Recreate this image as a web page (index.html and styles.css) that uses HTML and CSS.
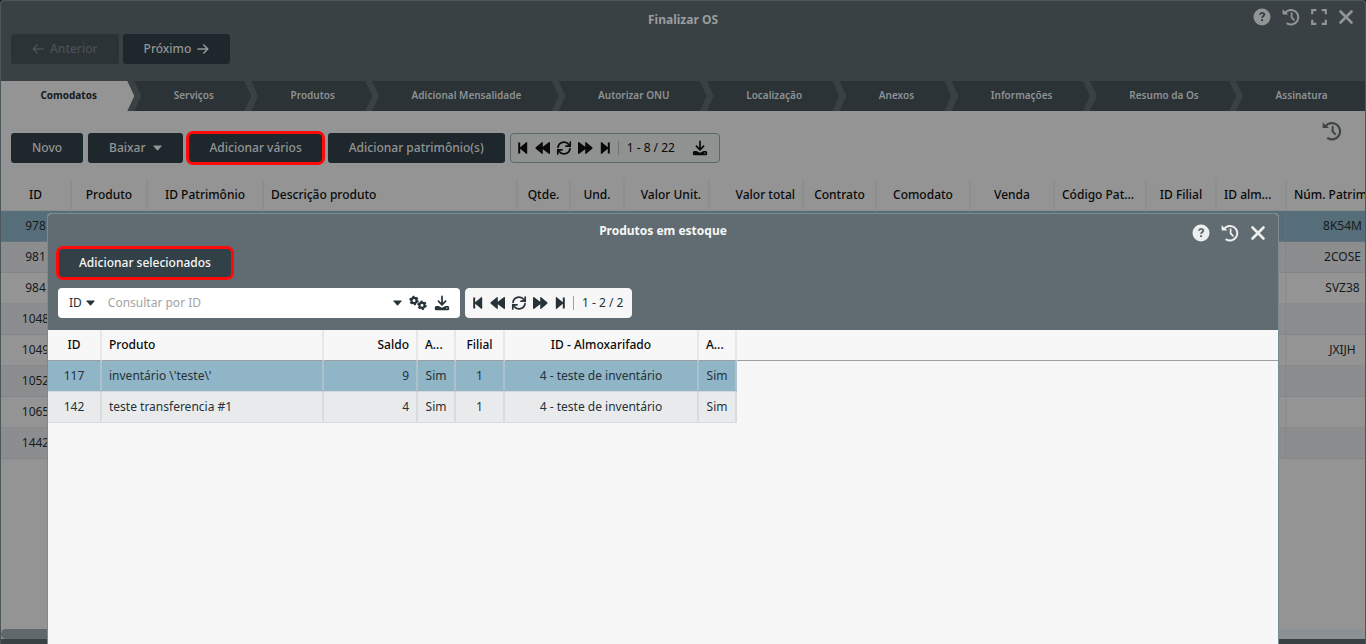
FILE: index.html
```html
<!DOCTYPE html>
<html lang="pt-BR">
<head>
<meta charset="utf-8">
<title>Finalizar OS</title>
<link rel="stylesheet" href="styles.css">
</head>
<body>
<svg class="sprite" aria-hidden="true">
  <symbol id="help" viewBox="0 0 18 18"><path fill="currentColor" fill-rule="evenodd" d="M9 .5a8.500 8.500 0 1 1 0 17a8.500 8.500 0 0 1 0-17zM6.200 6.800h1.900c.1-.8.500-1.100 1.100-1.100s1 .3 1 .9c0 1-1.900 1.200-1.900 3.100v.4h1.700c0-1.200 2.200-1.500 2.200-3.600c0-1.500-1.200-2.400-2.900-2.400c-1.900 0-3 1.100-3.100 2.700zM9.100 11a1.150 1.150 0 1 0 0 2.300a1.150 1.150 0 0 0 0-2.300z"/></symbol>
  <symbol id="history" viewBox="0 0 18 18"><g fill="none" stroke="currentColor" stroke-width="2"><path d="M3.300 4.600A7.300 7.300 0 1 1 5.400 15.600" stroke-linecap="round"/><path d="M9.600 5.200v4.300l2.300 2.300" stroke-width="1.800" stroke-linecap="round"/></g><path fill="currentColor" d="M.6 1.100L2.400 2.900L4.600 4.700L6.300 6.400H1.200q-.6 0-.6-.6z"/></symbol>
  <symbol id="expand" viewBox="0 0 16 16"><path fill="none" stroke="currentColor" stroke-width="2.200" d="M1.200 5.300V1.200H5.300M10.700 1.200h4.100v4.100M14.800 10.700v4.100h-4.100M5.300 14.800H1.200v-4.100"/></symbol>
  <symbol id="close" viewBox="0 0 16 16"><path fill="none" stroke="currentColor" stroke-width="2.600" stroke-linecap="round" d="M2.500 2.500l11 11M13.500 2.500l-11 11"/></symbol>
  <symbol id="left" viewBox="0 0 12 12"><path fill="none" stroke="currentColor" stroke-width="1.600" stroke-linecap="round" stroke-linejoin="round" d="M11 6H1.200M5.200 2L1.200 6l4 4"/></symbol>
  <symbol id="right" viewBox="0 0 12 12"><path fill="none" stroke="currentColor" stroke-width="1.600" stroke-linecap="round" stroke-linejoin="round" d="M1 6h9.800M6.800 2l4 4l-4 4"/></symbol>
  <symbol id="caret" viewBox="0 0 9 6"><path fill="currentColor" d="M.8.500h7.400q.8 0 .3.700L5 5.200q-.5.500-1 0L.5 1.200Q0 .5.800.500z"/></symbol>
  <symbol id="first" viewBox="1 1 14 14"><path fill="currentColor" d="M3.200 2.500h2v4.700l6-5q1-.7 1 .5v10.600q0 1.200-1 .5l-6-5v4.700h-2z"/></symbol>
  <symbol id="last" viewBox="1 1 14 14"><path fill="currentColor" d="M12.800 2.500h-2v4.700l-6-5q-1-.7-1 .5v10.600q0 1.200 1 .5l6-5v4.700h2z"/></symbol>
  <symbol id="rewind" viewBox="0 0 16 16"><path fill="currentColor" d="M.8 7.300L6.800 2.200q1-.7 1 .5v4L13.800 2.200q1.200-.7 1.200.5v10.600q0 1.200-1.200.5l-6-4.500v4q0 1.200-1 .5L.8 8.700q-.8-.7 0-1.400z"/></symbol>
  <symbol id="forward" viewBox="0 0 16 16"><path fill="currentColor" d="M15.200 7.300L9.200 2.200q-1-.7-1 .5v4L2.200 2.200Q1 1.500 1 2.700v10.600q0 1.200 1.200.5l6-4.500v4q0 1.200 1 .5l6-5.100q.8-.7 0-1.400z"/></symbol>
  <symbol id="refresh" viewBox="0 0 16 16"><g fill="none" stroke="currentColor" stroke-width="1.700" stroke-linecap="round" stroke-linejoin="round"><path d="M2 7.400A6 6 0 0 1 12.800 4.600L14 6M14 8.600A6 6 0 0 1 3.200 11.400L2 10"/><path d="M14.200 2v4.200H10M1.800 14V9.800H6"/></g></symbol>
  <symbol id="download" viewBox="0 0 16 16"><path fill="none" stroke="currentColor" stroke-width="1.700" stroke-linecap="round" stroke-linejoin="round" d="M8 1.400v8M4.400 6.200L8 9.800l3.600-3.600"/><path fill="currentColor" fill-rule="evenodd" d="M2.300 11h2.200L8 12.800L11.500 11h2.200q1.500 0 1.500 1.500v1.200q0 1.500-1.500 1.500H2.300Q.8 15.200.8 13.700v-1.200q0-1.500 1.500-1.500zM12.800 12.400a.7.700 0 1 0 0 1.400a.7.700 0 0 0 0-1.400z"/></symbol>
  <symbol id="gears" viewBox="0 0 18 16"><g fill="none" stroke="currentColor"><circle cx="5" cy="5.500" r="2.600" stroke-width="2.200"/><circle cx="5" cy="5.500" r="3.900" stroke-width="1.700" stroke-dasharray="2 2.084"/><circle cx="13" cy="10.300" r="2.600" stroke-width="2.200"/><circle cx="13" cy="10.300" r="3.900" stroke-width="1.700" stroke-dasharray="2 2.084"/></g></symbol>
</svg>

<main class="window">
  <header class="window-head">
    <h1 class="window-title">Finalizar OS</h1>
    <div class="window-tools">
      <button class="icon-btn" aria-label="Ajuda"><svg class="icon-18"><use href="#help"/></svg></button>
      <button class="icon-btn" aria-label="Histórico"><svg class="icon-18"><use href="#history"/></svg></button>
      <button class="icon-btn" aria-label="Expandir"><svg class="icon-16"><use href="#expand"/></svg></button>
      <button class="icon-btn" aria-label="Fechar"><svg class="icon-16"><use href="#close"/></svg></button>
    </div>
    <div class="step-buttons">
      <button class="btn btn-off" disabled><svg class="icon-12"><use href="#left"/></svg>Anterior</button>
      <button class="btn">Próximo<svg class="icon-12"><use href="#right"/></svg></button>
    </div>
  </header>

  <nav class="steps">
    <a class="step step-on" href="#">Comodatos</a>
    <a class="step" href="#">Serviços</a>
    <a class="step" href="#">Produtos</a>
    <a class="step" href="#">Adicional Mensalidade</a>
    <a class="step" href="#">Autorizar ONU</a>
    <a class="step" href="#">Localização</a>
    <a class="step" href="#">Anexos</a>
    <a class="step" href="#">Informações</a>
    <a class="step" href="#">Resumo da Os</a>
    <a class="step step-end" href="#">Assinatura</a>
  </nav>

  <div class="toolbar">
    <button class="btn">Novo</button>
    <button class="btn">Baixar<svg class="caret"><use href="#caret"/></svg></button>
    <button class="btn marked">Adicionar vários</button>
    <button class="btn">Adicionar patrimônio(s)</button>
    <div class="pager">
      <button class="icon-btn" aria-label="Primeira"><svg class="icon-14"><use href="#first"/></svg></button>
      <button class="icon-btn" aria-label="Anterior"><svg class="icon-16"><use href="#rewind"/></svg></button>
      <button class="icon-btn" aria-label="Atualizar"><svg class="icon-16"><use href="#refresh"/></svg></button>
      <button class="icon-btn" aria-label="Próxima"><svg class="icon-16"><use href="#forward"/></svg></button>
      <button class="icon-btn" aria-label="Última"><svg class="icon-14"><use href="#last"/></svg></button>
      <span class="count">1 - 8 / 22</span>
      <button class="icon-btn export" aria-label="Exportar"><svg class="icon-16"><use href="#download"/></svg></button>
    </div>
    <button class="icon-btn log" aria-label="Histórico"><svg class="icon-20"><use href="#history"/></svg></button>
  </div>

  <div class="grid-scroll">
    <table class="grid grid-main">
      <colgroup><col class="w71"><col class="w76"><col class="w116"><col class="w254"><col class="w53"><col class="w54"><col class="w85"><col class="w94"><col class="w73"><col class="w94"><col class="w84"><col class="w92"><col class="w70"><col class="w70"><col class="w113"></colgroup>
      <thead><tr><th>ID</th><th>Produto</th><th>ID Patrimônio</th><th class="start">Descrição produto</th><th>Qtde.</th><th>Und.</th><th class="end">Valor Unit.</th><th class="end">Valor total</th><th>Contrato</th><th>Comodato</th><th>Venda</th><th class="start">Código Pat...</th><th>ID Filial</th><th class="start">ID alm...</th><th class="start">Núm. Patrimônio</th></tr></thead>
      <tbody>
        <tr class="selected"><td>978</td><td></td><td></td><td></td><td></td><td></td><td></td><td></td><td></td><td></td><td></td><td></td><td></td><td></td><td>8K54M</td></tr>
        <tr><td>981</td><td></td><td></td><td></td><td></td><td></td><td></td><td></td><td></td><td></td><td></td><td></td><td></td><td></td><td>2COSE</td></tr>
        <tr><td>984</td><td></td><td></td><td></td><td></td><td></td><td></td><td></td><td></td><td></td><td></td><td></td><td></td><td></td><td>SVZ38</td></tr>
        <tr><td>1048</td><td></td><td></td><td></td><td></td><td></td><td></td><td></td><td></td><td></td><td></td><td></td><td></td><td></td><td></td></tr>
        <tr><td>1049</td><td></td><td></td><td></td><td></td><td></td><td></td><td></td><td></td><td></td><td></td><td></td><td></td><td></td><td>JXIJH</td></tr>
        <tr><td>1052</td><td></td><td></td><td></td><td></td><td></td><td></td><td></td><td></td><td></td><td></td><td></td><td></td><td></td><td></td></tr>
        <tr><td>1065</td><td></td><td></td><td></td><td></td><td></td><td></td><td></td><td></td><td></td><td></td><td></td><td></td><td></td><td></td></tr>
        <tr><td>1442</td><td></td><td></td><td></td><td></td><td></td><td></td><td></td><td></td><td></td><td></td><td></td><td></td><td></td><td></td></tr>
      </tbody>
    </table>
  </div>
  <div class="scrollbar"><div class="scroll-thumb"></div></div>
  <div class="window-foot"></div>
</main>

<section class="modal" role="dialog" aria-labelledby="modal-title">
  <header class="modal-head">
    <h2 class="modal-title" id="modal-title">Produtos em estoque</h2>
    <div class="modal-tools">
      <button class="icon-btn" aria-label="Ajuda"><svg class="icon-18"><use href="#help"/></svg></button>
      <button class="icon-btn" aria-label="Histórico"><svg class="icon-18"><use href="#history"/></svg></button>
      <button class="icon-btn" aria-label="Fechar"><svg class="icon-16"><use href="#close"/></svg></button>
    </div>
    <div class="modal-actions"><button class="btn btn-bright marked">Adicionar selecionados</button></div>
    <div class="modal-search">
      <div class="search">
        <button class="field">ID<svg class="caret"><use href="#caret"/></svg></button>
        <input class="query" type="text" aria-label="Consultar por ID" placeholder="Consultar por ID">
        <button class="icon-btn" aria-label="Opções"><svg class="caret"><use href="#caret"/></svg></button>
        <button class="icon-btn" aria-label="Configurar"><svg class="icon-gears"><use href="#gears"/></svg></button>
        <button class="icon-btn" aria-label="Exportar"><svg class="icon-16"><use href="#download"/></svg></button>
      </div>
      <div class="pager pager-bright">
        <button class="icon-btn" aria-label="Primeira"><svg class="icon-14"><use href="#first"/></svg></button>
        <button class="icon-btn" aria-label="Anterior"><svg class="icon-16"><use href="#rewind"/></svg></button>
        <button class="icon-btn" aria-label="Atualizar"><svg class="icon-16"><use href="#refresh"/></svg></button>
        <button class="icon-btn" aria-label="Próxima"><svg class="icon-16"><use href="#forward"/></svg></button>
        <button class="icon-btn" aria-label="Última"><svg class="icon-14"><use href="#last"/></svg></button>
        <span class="count">1 - 2 / 2</span>
      </div>
    </div>
  </header>
  <div class="modal-body">
    <table class="grid grid-stock">
      <colgroup><col class="w54"><col class="w222"><col class="w94"><col class="w38"><col class="w49"><col class="w194"><col class="w38"></colgroup>
      <thead><tr><th>ID</th><th class="start">Produto</th><th class="end">Saldo</th><th class="start">A...</th><th>Filial</th><th>ID - Almoxarifado</th><th class="start">A...</th></tr></thead>
      <tbody>
        <tr class="selected"><td>117</td><td class="start">inventário \'teste\'</td><td class="end">9</td><td>Sim</td><td>1</td><td>4 - teste de inventário</td><td>Sim</td></tr>
        <tr><td>142</td><td class="start">teste transferencia #1</td><td class="end">4</td><td>Sim</td><td>1</td><td>4 - teste de inventário</td><td>Sim</td></tr>
      </tbody>
    </table>
    <div class="head-rule"></div>
  </div>
</section>
</body>
</html>
```
FILE: styles.css
```css
* { box-sizing: border-box; }

body {
  margin: 0;
  height: 100vh;
  overflow: hidden;
  background: #161e20;
  font: 12px/16px "Noto Sans", "Open Sans", sans-serif;
  color: #151a1c;
}

button, input { font: inherit; color: inherit; }
svg { display: block; flex: none; }
h1, h2 { margin: 0; font-size: 12px; font-weight: 700; text-align: center; }

.sprite { position: absolute; width: 0; height: 0; }
.icon-12 { width: 12px; height: 12px; }
.icon-14 { width: 14px; height: 14px; }
.icon-16 { width: 16px; height: 16px; }
.icon-18 { width: 18px; height: 18px; }
.icon-20 { width: 20px; height: 20px; }
.icon-gears { width: 18px; height: 16px; }
.caret { width: 9px; height: 6px; }

.window {
  display: flex;
  flex-direction: column;
  height: 100vh;
  border: 1px solid #4b575a;
  border-bottom: 0;
  border-radius: 4px 4px 0 0;
  background: #949494;
  overflow: hidden;
}

.window-head {
  position: relative;
  height: 80px;
  padding: 11px 10px 0;
  background: #3a4144;
}
.window-title { color: #999d9e; }
.window-tools {
  position: absolute;
  top: 7px;
  right: 11px;
  display: flex;
  align-items: center;
  gap: 11px;
  color: #929595;
}
.step-buttons { display: flex; gap: 4px; margin-top: 6px; }
.step-buttons .btn { gap: 6px; }

.icon-btn {
  display: flex;
  padding: 0;
  border: 0;
  background: none;
  cursor: pointer;
}

.btn {
  display: flex;
  align-items: center;
  gap: 8px;
  height: 30px;
  padding: 0 21px;
  border: 0;
  border-radius: 3px;
  background: #1e282c;
  color: #949494;
  font-weight: 500;
  white-space: nowrap;
}
.btn-off { background: #2b3337; color: #4a5154; }
.btn-bright { background: #324147; color: #f7f7f7; }
.marked { outline: 3px solid #ff0a0a; outline-offset: -1px; border-radius: 5px; }

.steps { display: flex; height: 30px; background: #3a4144; }
.step {
  flex: 1 1 auto;
  padding: 7px 35px 0 37px;
  background: #2b3337;
  clip-path: polygon(0 0, calc(100% - 7px) 0, 100% 50%, calc(100% - 7px) 100%, 0 100%, 7px 50%);
  color: #8e9293;
  font-size: 10px;
  line-height: 14px;
  font-weight: 600;
  text-align: center;
  text-decoration: none;
  white-space: nowrap;
}
.step-on {
  background: #949494;
  color: #151a1c;
  font-weight: 700;
  clip-path: polygon(0 0, calc(100% - 7px) 0, 100% 50%, calc(100% - 7px) 100%, 0 100%);
}
.step-end { clip-path: polygon(0 0, 100% 0, 100% 100%, 0 100%, 7px 50%); }

.toolbar {
  display: flex;
  gap: 5px;
  padding: 22px 10px 17px;
}

.pager {
  display: flex;
  align-items: center;
  gap: 5px;
  height: 30px;
  padding: 0 11px 0 5px;
  border: 1px solid #5b6769;
  border-radius: 4px;
  background: #8f9291;
  color: #0a0a0a;
}
.pager-bright {
  padding-right: 8px;
  border-color: #f7f7f7;
  background: #f7f7f7;
  color: #263238;
}
.count { margin-left: 1px; padding-left: 8px; border-left: 1px solid #6b7274; line-height: 14px; white-space: nowrap; }
.pager-bright .count { border-color: #9aa2a5; }
.export { margin-left: 12px; }
.log { align-self: flex-start; margin: -12px 13px 0 auto; color: #3f4547; }

.grid-scroll { flex: 1; overflow: hidden; }
.grid {
  border-collapse: separate;
  border-spacing: 0;
  table-layout: fixed;
}
.grid-main { width: 1399px; }
.grid-stock { width: 689px; }
.grid th, .grid td {
  height: 31px;
  padding: 0 7px;
  border-right: 2px solid rgba(120, 125, 130, 0.25);
  border-bottom: 1px solid rgba(120, 125, 130, 0.4);
  text-align: center;
  white-space: nowrap;
  overflow: hidden;
}
.grid th { font-weight: 500; color: #0a0a0a; }
.grid .start { text-align: left; }
.grid .end { text-align: right; }
.grid tbody tr:nth-child(even) { background: #8c8d8f; }
.grid tbody .selected { background: #566e7a; }
.grid-stock tbody tr:nth-child(even) { background: #e9eaec; }
.grid-stock tbody .selected { background: #8fb5c7; }
.grid-stock th { border-right-color: #e6e7e8; border-bottom-color: #9c9fa1; }
.grid-stock td { border-right-color: rgba(200, 205, 208, 0.5); border-bottom-color: #d6dadc; color: #263238; }

.w38 { width: 38px; }
.w49 { width: 49px; }
.w53 { width: 53px; }
.w54 { width: 54px; }
.w70 { width: 70px; }
.w71 { width: 71px; }
.w73 { width: 73px; }
.w76 { width: 76px; }
.w84 { width: 84px; }
.w85 { width: 85px; }
.w92 { width: 92px; }
.w94 { width: 94px; }
.w113 { width: 113px; }
.w116 { width: 116px; }
.w194 { width: 194px; }
.w222 { width: 222px; }
.w254 { width: 254px; }

.scrollbar { height: 10px; background: #8c9294; }
.scroll-thumb { width: 80%; height: 10px; border-radius: 5px; background: #61686b; }
.window-foot { height: 5px; background: #3a4144; }

.modal {
  position: absolute;
  top: 213px;
  left: 47px;
  right: 87px;
  bottom: 0;
  display: flex;
  flex-direction: column;
  border: 1px solid #7b8b91;
  border-bottom: 0;
  border-radius: 4px 4px 0 0;
  background: #f7f7f7;
  overflow: hidden;
}
.modal-head { padding: 9px 10px 12px; background: #606c71; color: #f7f7f7; }
.modal-tools {
  position: absolute;
  top: 10px;
  right: 12px;
  display: flex;
  align-items: center;
  gap: 11px;
  color: #eeeeee;
}
.modal-actions { display: flex; margin-top: 9px; }
.modal-search { display: flex; gap: 5px; margin-top: 10px; }
.search {
  display: flex;
  align-items: center;
  gap: 7px;
  width: 402px;
  height: 30px;
  padding: 0 10px 0 11px;
  border-radius: 4px;
  background: #fff;
  color: #263238;
}
.field { display: flex; align-items: center; gap: 4px; padding: 0; border: 0; background: none; }
.query { flex: 1; min-width: 0; padding: 0 6px; border: 0; outline: 0; background: none; }
.query::placeholder { color: #a3a3a3; opacity: 1; }
.modal-body { display: flex; align-items: flex-start; flex: 1; }
.head-rule { flex: 1; height: 31px; border-bottom: 1px solid #9c9fa1; }
```
